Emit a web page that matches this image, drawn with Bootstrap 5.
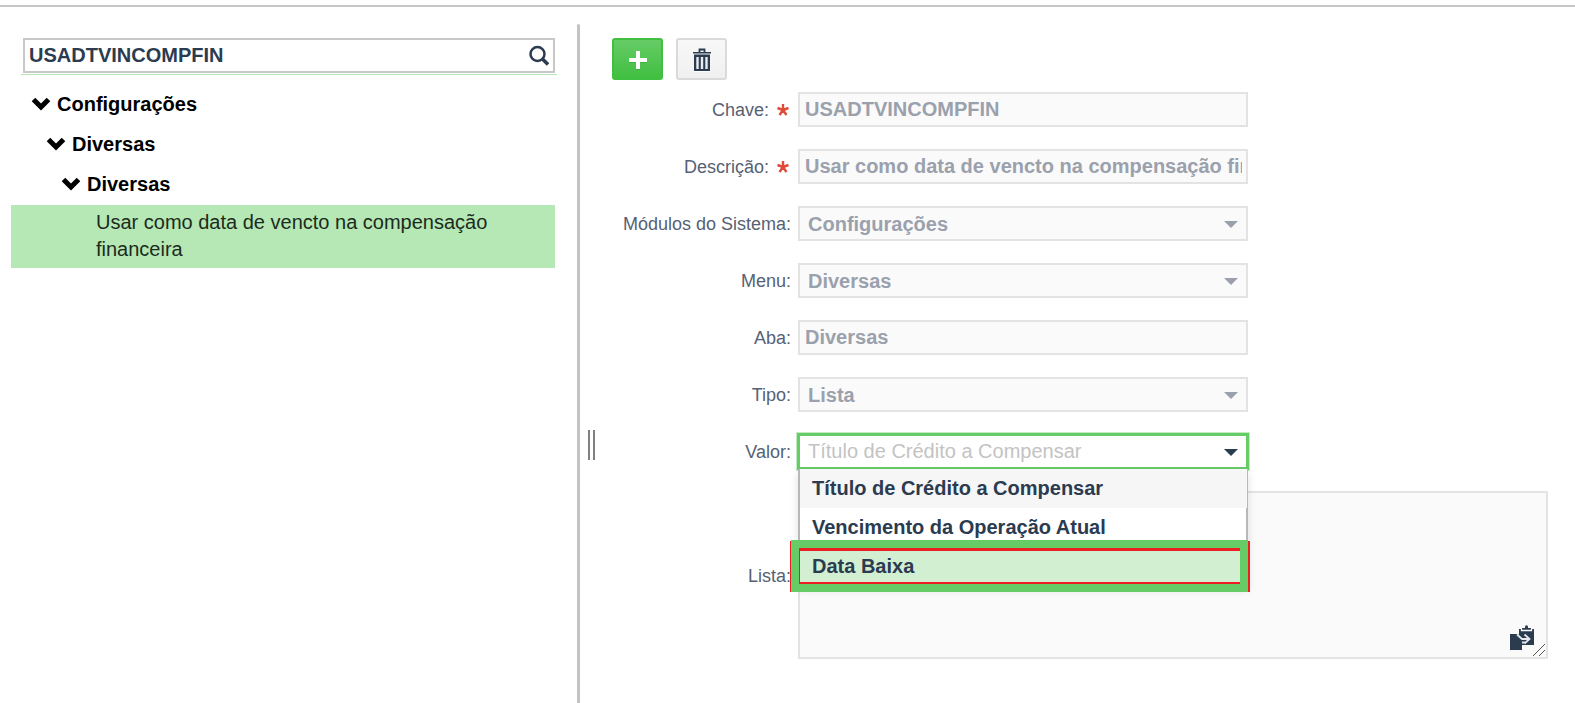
<!DOCTYPE html>
<html lang="pt-BR">
<head>
<meta charset="utf-8">
<meta name="viewport" content="width=device-width, initial-scale=1">
<title>Configurações</title>
<link href="https://cdn.jsdelivr.net/npm/bootstrap@5.3.0/dist/css/bootstrap.min.css" rel="stylesheet">
<style>
  :root { --ink: #2b3b50; --green: #66cc66; --edge: #e3e3e3; --field: #fafafa; --muted-ink: #9aa1ad; }
  body { font-family: "Liberation Sans", Arial, sans-serif; font-size: 20px; line-height: 27px; color: #000; background: #fff; }
  .top-rule { height: 7px; border-bottom: 2px solid #c6c6c6; }
  .shell { padding-top: 17px; }
  .tree-pane { width: 577px; padding: 14px 22px 0 11px; }
  .tree-nav { padding-top: 9px; }
  .split-bar { width: 3px; background: #c3c3c3; border-radius: 3px 3px 0 0; }
  .split-grip { width: 7px; height: 30px; margin-left: 8px; margin-top: 406px; border: solid #808080; border-width: 0 2px; }
  .form-pane { padding: 14px 27px 44px 17px; }

  .search-wrap { margin: 0 -2px 0 10px; padding: 0 2px 1px; border-bottom: 1px solid #b5e8b5; }
  .search-box { height: 35px; border: 2px solid #c8c8c8; padding-left: 4px; }
  .search-box input { border: 0; outline: 0; min-width: 0; padding: 0; font-weight: bold; color: var(--ink); background: none; }
  .search-box button, .combo button { border: 0; background: none; padding: 0; line-height: 0; }

  .tree-node { height: 40px; font-weight: bold; color: #000; text-decoration: none; gap: 6px; }
  .lvl-1 { padding-left: 20px; } .lvl-2 { padding-left: 35px; } .lvl-3 { padding-left: 50px; }
  .tree-leaf { background: #b5e8b5; margin-top: 1px; padding: 4px 40px 5px 85px; color: #1c2b1c; text-decoration: none; }

  .tools { gap: 13px; margin-bottom: 12px; }
  .tool-btn { width: 51px; height: 42px; padding: 2px 0 0; border: 2px solid #dadada; border-radius: 3px; background: linear-gradient(#f8f8f8, #f0f0f0); line-height: 0; }
  .tool-add { border-color: #40bf40; background: linear-gradient(#66cc66, #40bf40); }

  .field-row { display: grid; grid-template-columns: 179px minmax(0, 1fr); column-gap: 7px; align-items: center; margin-bottom: 22px; }
  .field-row > label { font-size: 18px; padding-top: 2px; text-align: right; color: #566174; white-space: nowrap; }
  .field-row > label svg { margin: 0 2px 3px 3px; }
  .ctl { display: block; width: 100%; max-width: 450px; height: 35px; border: 2px solid var(--edge); border-radius: 0; background: var(--field); color: var(--muted-ink); font-weight: bold; padding: 0 4px 0 5px; opacity: 1; }
  select.ctl { appearance: none; padding: 1px 30px 0 8px; background: var(--field) url("data:image/svg+xml,%3Csvg xmlns='http://www.w3.org/2000/svg' width='14' height='7'%3E%3Cpath d='M0 0h14L7 7z' fill='%239aa1ad'/%3E%3C/svg%3E") no-repeat right 8px top 13px; }

  .combo { position: relative; max-width: 450px; }
  .combo .ctl { background: #fff; border-color: var(--green); font-weight: normal; padding: 0 30px 0 8px; outline: 0; box-shadow: 0 0 0 1px var(--green), 0 0 0 2px #c4ecc4; }
  .combo .ctl::placeholder { color: #c3c3c3; opacity: 1; }
  .combo button { position: absolute; right: 10px; top: 15px; }
  .combo-list { position: absolute; z-index: 2; top: 35px; left: 0; right: 0; margin: 0; padding: 0; list-style: none; background: #fff; border: solid #b8b8b8; border-width: 0 2px; font-weight: bold; color: var(--ink); box-shadow: 0 4px 8px rgba(0,0,0,.12); }
  .combo-list li { height: 39px; padding: 6px 12px; }
  .combo-list li:first-child { background: #f6f6f6; margin-right: -1px; }
  .combo-list .picked { position: relative; z-index: 0; }
  .picked::before { content: ""; position: absolute; z-index: -1; inset: -7px 0 -6px -9px; border: 8px solid var(--green); margin-right: -2px; background: #d2efd2; box-shadow: inset 1px 0 #ee1c23, inset 0 3px #ee1c23, inset 0 -2px #ee1c23; }
  .picked::after { content: ""; position: absolute; z-index: -2; inset: -6px -4px -6px -10px; background: #ee1c23; }

  .list-area { position: relative; }
  .list-area textarea { display: block; width: 100%; height: 168px; border: 2px solid var(--edge); background: var(--field); resize: none; outline: 0; }
  .paste-btn { position: absolute; right: 14px; bottom: 9px; padding: 0; border: 0; background: none; line-height: 0; }
  .corner { position: absolute; right: 3px; bottom: 3px; }
</style>
</head>
<body class="d-flex flex-column min-vh-100">
<div class="top-rule"></div>
<div class="shell d-flex flex-grow-1">
  <aside class="tree-pane flex-shrink-0">
    <div class="search-wrap">
      <form class="search-box d-flex align-items-center">
        <input class="flex-grow-1" type="text" aria-label="Pesquisar" value="USADTVINCOMPFIN">
        <button type="button" aria-label="Pesquisar" class="me-1">
          <svg width="20" height="21" viewBox="0 0 20 21" fill="none" stroke="#2b3b50"><circle cx="8.500" cy="9" r="7" stroke-width="2.500"/><path d="M13 13.500l6 6" stroke-width="3.600"/></svg>
        </button>
      </form>
    </div>
    <nav class="tree-nav d-flex flex-column">
      <a href="#" class="tree-node lvl-1 d-flex align-items-center"><svg width="20" height="14" viewBox="0 0 20 14"><path d="M2.500 2.500L10 10l7.500-7.500" fill="none" stroke="#000" stroke-width="5"/></svg>Configurações</a>
      <a href="#" class="tree-node lvl-2 d-flex align-items-center"><svg width="20" height="14" viewBox="0 0 20 14"><path d="M2.500 2.500L10 10l7.500-7.500" fill="none" stroke="#000" stroke-width="5"/></svg>Diversas</a>
      <a href="#" class="tree-node lvl-3 d-flex align-items-center"><svg width="20" height="14" viewBox="0 0 20 14"><path d="M2.500 2.500L10 10l7.500-7.500" fill="none" stroke="#000" stroke-width="5"/></svg>Diversas</a>
      <a href="#" class="tree-leaf">Usar como data de vencto na compensação financeira</a>
    </nav>
  </aside>
  <div class="split-bar flex-shrink-0"></div>
  <div class="split-grip flex-shrink-0"></div>
  <main class="form-pane flex-grow-1">
    <div class="tools d-flex">
      <button type="button" class="tool-btn tool-add" aria-label="Adicionar"><svg width="20" height="20" viewBox="0 0 20 20"><path d="M8 1h4v7h7v4h-7v7H8v-7H1V8h7z" fill="#309530" opacity=".5" transform="translate(0 1)"/><path d="M8 1h4v7h7v4h-7v7H8v-7H1V8h7z" fill="#fff"/></svg></button>
      <button type="button" class="tool-btn" aria-label="Excluir"><svg width="18" height="24" viewBox="0 0 18 24"><path d="M6.500 4V1.500h5V4" fill="none" stroke="#2b3b50" stroke-width="1.800"/><path d="M0 4h18v1.500H0z" fill="#2b3b50"/><path d="M1 5.500h16V7H1z" fill="#8d96a5"/><path d="M1 7h16v16H1z" fill="#2b3b50"/><path d="M4.500 9v12M9 9v12M13.500 9v12" stroke="#e9ebee" stroke-width="2.400"/><path d="M1 23h16v1H1z" fill="#fff"/></svg></button>
    </div>
    <div class="field-row"><label for="chave">Chave: <svg width="12" height="12" viewBox="0 0 12 12"><path d="M6 6V0M6 6L.500 4M6 6l5.500-2M6 6l-3.500 5M6 6l3.500 5" stroke="#e04a38" stroke-width="2.400"/></svg></label><input id="chave" class="ctl" disabled value="USADTVINCOMPFIN"></div>
    <div class="field-row"><label for="descricao">Descrição: <svg width="12" height="12" viewBox="0 0 12 12"><path d="M6 6V0M6 6L.500 4M6 6l5.500-2M6 6l-3.500 5M6 6l3.500 5" stroke="#e04a38" stroke-width="2.400"/></svg></label><input id="descricao" class="ctl" disabled value="Usar como data de vencto na compensação financeira"></div>
    <div class="field-row"><label for="modulos">Módulos do Sistema:</label><select id="modulos" class="ctl" disabled><option>Configurações</option></select></div>
    <div class="field-row"><label for="menu">Menu:</label><select id="menu" class="ctl" disabled><option>Diversas</option></select></div>
    <div class="field-row"><label for="aba">Aba:</label><input id="aba" class="ctl" disabled value="Diversas"></div>
    <div class="field-row"><label for="tipo">Tipo:</label><select id="tipo" class="ctl" disabled><option>Lista</option></select></div>
    <div class="field-row"><label for="valor">Valor:</label>
      <div class="combo">
        <input id="valor" class="ctl" role="combobox" aria-expanded="true" aria-controls="valores" placeholder="Título de Crédito a Compensar">
        <button type="button" aria-label="Abrir lista"><svg width="14" height="7"><path d="M0 0h14L7 7z" fill="#2b3b50"/></svg></button>
        <ul id="valores" class="combo-list" role="listbox">
          <li role="option">Título de Crédito a Compensar</li>
          <li role="option">Vencimento da Operação Atual</li>
          <li role="option" class="picked" aria-selected="true">Data Baixa</li>
        </ul>
      </div>
    </div>
    <div class="field-row mb-0"><label for="lista">Lista:</label>
      <div class="list-area">
        <textarea id="lista"></textarea>
        <button type="button" class="paste-btn" aria-label="Colar"><svg width="25" height="25" viewBox="0 0 25 25"><path d="M10 4h3V3h3V1.500Q17.500-1 19 1.500V3h3v1h3v16H10z" fill="#2b3b50"/><path d="M12.500 3.500v2h10v-2" fill="none" stroke="#fafafa" stroke-width="1.300"/><path d="M1 9h8l4 4v12H1z" fill="#2b3b50"/><path d="M8 9.500l5 4.500h7M15.500 9.500l5 4.500-5 4.500M13 17.500h3" fill="none" stroke="#e4e7eb" stroke-width="1.800"/></svg></button>
        <svg class="corner" width="12" height="12" viewBox="0 0 12 12"><path d="M0 12L12 0M6 12l6-6" stroke="#555" stroke-width="1"/></svg>
      </div>
    </div>
  </main>
</div>
<script src="https://cdn.jsdelivr.net/npm/bootstrap@5.3.0/dist/js/bootstrap.bundle.min.js"></script>
</body>
</html>
